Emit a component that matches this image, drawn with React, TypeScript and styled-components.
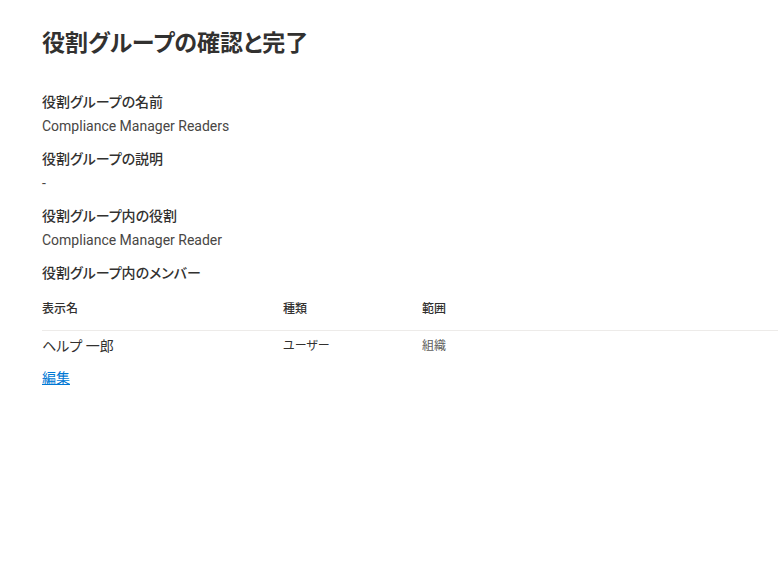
import React from 'react';
import styled, { createGlobalStyle } from 'styled-components';

const GlobalStyle = createGlobalStyle`
  body {
    margin: 0;
    background: #ffffff;
    font-family: Roboto, "Noto Sans CJK JP", sans-serif;
    font-feature-settings: "palt";
    color: #323130;
  }
`;

const Page = styled.div`
  padding: 28px 0 0 42px;
`;

const Title = styled.h1`
  margin: 0 0 30px;
  font-size: 23px;
  line-height: 32px;
  font-weight: 700;
  color: #323130;
`;

const Field = styled.div`
  margin-bottom: 9px;
`;

const Label = styled.div`
  font-size: 14px;
  line-height: 24px;
  font-weight: 500;
  color: #323130;
`;

const Value = styled.div`
  font-size: 14px;
  line-height: 24px;
  color: #484644;
`;

const Table = styled.div`
  display: grid;
  grid-template-columns: 241px 139px 1fr;
`;

const HeaderCell = styled.div`
  height: 45px;
  display: flex;
  align-items: center;
  font-size: 12px;
  font-weight: 500;
  color: #323130;
  border-bottom: 1px solid #edebe9;
`;

const Cell = styled.div<{ $size?: number; $muted?: boolean }>`
  height: 27px;
  display: flex;
  align-items: center;
  font-size: ${p => p.$size ?? 12}px;
  color: ${p => (p.$muted ? '#605e5c' : '#323130')};
`;

const EditLink = styled.a`
  display: inline-block;
  margin-top: 8px;
  font-size: 14px;
  line-height: 24px;
  color: #0078d4;
  text-decoration: underline;
  cursor: pointer;
`;

const fields = [
  { label: '役割グループの名前', value: 'Compliance Manager Readers' },
  { label: '役割グループの説明', value: '-' },
  { label: '役割グループ内の役割', value: 'Compliance Manager Reader' },
];

const App = () => (
  <>
    <GlobalStyle />
    <Page>
      <Title>役割グループの確認と完了</Title>
      {fields.map(f => (
        <Field key={f.label}>
          <Label>{f.label}</Label>
          <Value>{f.value}</Value>
        </Field>
      ))}
      <Label>役割グループ内のメンバー</Label>
      <Table>
        <HeaderCell>表示名</HeaderCell>
        <HeaderCell>種類</HeaderCell>
        <HeaderCell>範囲</HeaderCell>
        <Cell $size={14}>ヘルプ 一郎</Cell>
        <Cell>ユーザー</Cell>
        <Cell $muted>組織</Cell>
      </Table>
      <EditLink>編集</EditLink>
    </Page>
  </>
);

export default App;
